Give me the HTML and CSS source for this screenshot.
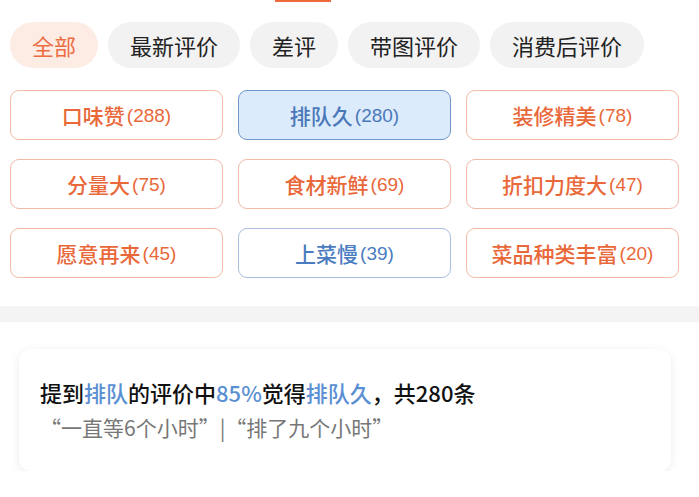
FILE: index.html
```html
<!DOCTYPE html>
<html lang="zh-CN">
<head>
<meta charset="utf-8">
<link rel="stylesheet" href="styles.css">
</head>
<body>
<div class="tab-indicator"></div>
<div class="filters">
  <span class="pill active">全部</span>
  <span class="pill">最新评价</span>
  <span class="pill">差评</span>
  <span class="pill">带图评价</span>
  <span class="pill">消费后评价</span>
</div>
<div class="tags">
  <div class="tag">口味赞<span class="num">(288)</span></div>
  <div class="tag blue selected">排队久<span class="num">(280)</span></div>
  <div class="tag">装修精美<span class="num">(78)</span></div>
  <div class="tag">分量大<span class="num">(75)</span></div>
  <div class="tag">食材新鲜<span class="num">(69)</span></div>
  <div class="tag">折扣力度大<span class="num">(47)</span></div>
  <div class="tag">愿意再来<span class="num">(45)</span></div>
  <div class="tag blue">上菜慢<span class="num">(39)</span></div>
  <div class="tag">菜品种类丰富<span class="num">(20)</span></div>
</div>
<div class="divider"></div>
<div class="summary">
  <p class="headline">提到<span class="hl">排队</span>的评价中<span class="hl">85%</span>觉得<span class="hl">排队久</span>，共280条</p>
  <p class="quotes">“一直等6个小时”|“排了九个小时”</p>
</div>
</body>
</html>
```
FILE: styles.css
```css
* { box-sizing: border-box; }
body {
  margin: 0;
  background: #fff;
  font-family: "Noto Sans CJK SC", "Noto Sans", sans-serif;
  width: 699px;
}
.tab-indicator {
  margin-left: 275px;
  width: 56px;
  height: 2px;
  background: #ef6a3a;
}
.filters {
  display: flex;
  gap: 10px;
  padding: 20px 0 0 10px;
}
.pill {
  height: 46px;
  border-radius: 23px;
  padding: 0 22px;
  display: flex;
  align-items: center;
  background: #f2f2f2;
  color: #222;
  font-size: 22px;
  line-height: 1;
}
.pill:first-child { width: 88px; justify-content: center; padding: 0; }
.pill.active {
  background: #fdece4;
  color: #ec6d43;
}
.tags {
  display: grid;
  grid-template-columns: repeat(3, 213px);
  grid-auto-rows: 50px;
  column-gap: 15px;
  row-gap: 19px;
  padding: 22px 0 0 10px;
}
.tag {
  border: 1px solid #f1b9a8;
  border-radius: 9px;
  display: flex;
  align-items: center;
  justify-content: center;
  color: #e9683a;
  font-size: 21px;
  font-weight: 500;
  line-height: 1;
}
.tag .num {
  font-family: "Liberation Sans", sans-serif;
  font-weight: 400;
  font-size: 19px;
  margin-left: 2px;
}
.tag.blue {
  border-color: #a8bfe0;
  color: #4a7cc0;
}
.tag.selected {
  background: #dcebfb;
  border-color: #6d96cb;
  color: #4a78b8;
}
.divider {
  margin-top: 28px;
  height: 16px;
  background: #f4f4f4;
}
.summary {
  margin: 27px 28px 0 19px;
  height: 122px;
  border-radius: 12px;
  background: #fff;
  box-shadow: 0 2px 10px rgba(0, 0, 0, 0.08);
  padding: 29px 21px 0;
}
.summary p { margin: 0; }
.headline {
  font-size: 22px;
  font-weight: 500;
  line-height: 28px;
  color: #111;
}
.headline .hl { color: #5b8fd3; }
.quotes {
  margin-top: 8px !important;
  font-size: 21px;
  line-height: 26px;
  color: #777;
}
```
